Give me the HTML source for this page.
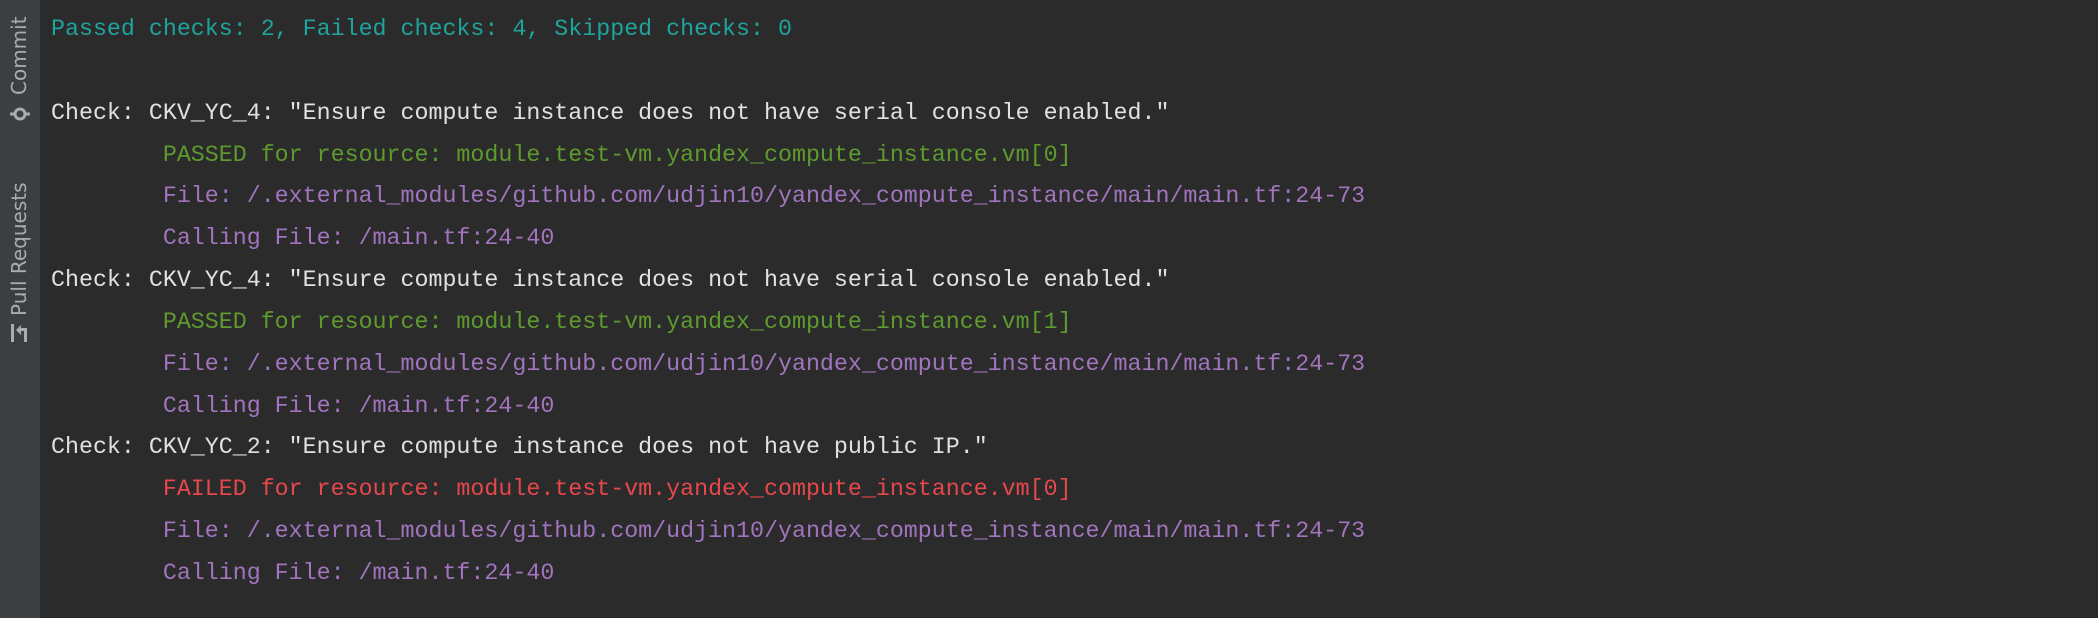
<!DOCTYPE html>
<html><head><meta charset="utf-8"><style>
html,body{margin:0;padding:0;width:2098px;height:618px;background:#2b2b2b;overflow:hidden}
.side{position:absolute;left:0;top:0;width:40px;height:618px;background:#3c3f41}
.vt{position:absolute;font-family:"DejaVu Sans","Liberation Sans",sans-serif;font-size:20px;color:#a9acae;transform:rotate(-90deg);transform-origin:left top;white-space:nowrap}
.con{position:absolute;left:51px;top:9px;font-family:"Liberation Mono",monospace;font-size:23.3px;line-height:41.85px;white-space:pre;color:#dfe1e5}
.t{color:#1fa39d}.g{color:#5e9a2e}.p{color:#a174bd}.r{color:#e5484b}
</style></head><body>
<div class="side">
<div class="vt" style="left:7px;top:95px">Commit</div>
<svg style="position:absolute;left:9px;top:104px" width="22" height="20" viewBox="0 0 22 20"><circle cx="11" cy="10" r="5" fill="none" stroke="#a9acae" stroke-width="3"/><line x1="1" y1="10" x2="6" y2="10" stroke="#a9acae" stroke-width="3"/><line x1="16" y1="10" x2="21" y2="10" stroke="#a9acae" stroke-width="3"/></svg>
<div class="vt" style="left:7px;top:316px">Pull Requests</div>
<svg style="position:absolute;left:10px;top:323px" width="20" height="20" viewBox="0 0 20 20"><rect x="1" y="1" width="3" height="18" fill="#a9acae"/><path d="M6 7 L11 2 L11 5 L17 5 L17 19 L14 19 L14 8 L11 8 L11 12 Z" fill="#a9acae"/></svg>
</div>
<div class="con"><span class="t">Passed checks: 2, Failed checks: 4, Skipped checks: 0</span>

Check: CKV_YC_4: "Ensure compute instance does not have serial console enabled."
<span class="g">        PASSED for resource: module.test-vm.yandex_compute_instance.vm[0]</span>
<span class="p">        File: /.external_modules/github.com/udjin10/yandex_compute_instance/main/main.tf:24-73</span>
<span class="p">        Calling File: /main.tf:24-40</span>
Check: CKV_YC_4: "Ensure compute instance does not have serial console enabled."
<span class="g">        PASSED for resource: module.test-vm.yandex_compute_instance.vm[1]</span>
<span class="p">        File: /.external_modules/github.com/udjin10/yandex_compute_instance/main/main.tf:24-73</span>
<span class="p">        Calling File: /main.tf:24-40</span>
Check: CKV_YC_2: "Ensure compute instance does not have public IP."
<span class="r">        FAILED for resource: module.test-vm.yandex_compute_instance.vm[0]</span>
<span class="p">        File: /.external_modules/github.com/udjin10/yandex_compute_instance/main/main.tf:24-73</span>
<span class="p">        Calling File: /main.tf:24-40</span></div>
</body></html>
